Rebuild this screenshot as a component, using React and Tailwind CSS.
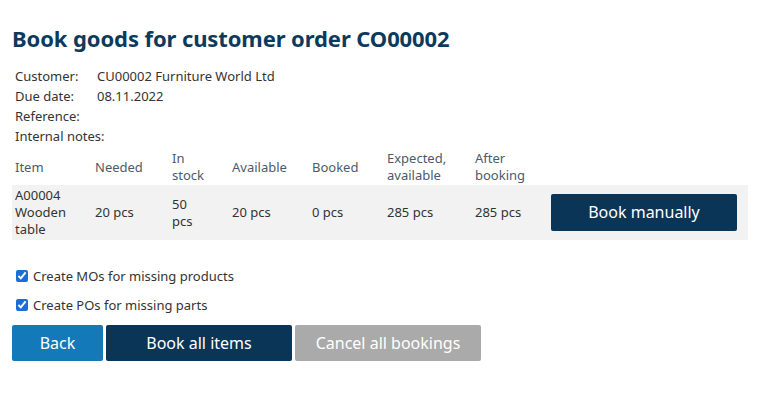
import { useState } from 'react';

const cols = 'grid grid-cols-[80px_77px_60px_80px_75px_88px_76px_200px]';

function App() {
    const [createMOs, setCreateMOs] = useState(true);
    const [createPOs, setCreatePOs] = useState(true);

    return (
        <div className="min-h-screen bg-white px-3 pt-[24px] text-[13px] text-[#333333] font-['Noto_Sans',sans-serif]">
            <h1 className="text-[22px] font-bold leading-[28px] text-[#0d3a5c] tracking-[-0.1px]">
                Book goods for customer order CO00002
            </h1>

            {/* Order info */}
            <div className="mt-[14px] pl-[3px] leading-[20px] whitespace-nowrap">
                <div className="flex"><span className="w-[82px]">Customer:</span><span>CU00002 Furniture World Ltd</span></div>
                <div className="flex"><span className="w-[82px]">Due date:</span><span>08.11.2022</span></div>
                <div className="flex"><span className="w-[82px]">Reference:</span><span></span></div>
                <div className="flex"><span className="w-[82px]">Internal notes:</span><span></span></div>
            </div>

            {/* Items table */}
            <div className="mt-[3px] w-[736px] leading-[17px]">
                <div className={`${cols} h-[36px] items-center text-[#4a5b6c]`}>
                    <div className="pl-[3px]">Item</div>
                    <div className="pl-[3px]">Needed</div>
                    <div className="pl-[3px]">In<br />stock</div>
                    <div className="pl-[3px]">Available</div>
                    <div className="pl-[3px]">Booked</div>
                    <div className="pl-[3px]">Expected,<br />available</div>
                    <div className="pl-[3px]">After<br />booking</div>
                    <div></div>
                </div>
                <div className={`${cols} h-[55px] items-center bg-[#f2f2f2]`}>
                    <div className="pl-[3px]">A00004<br />Wooden<br />table</div>
                    <div className="pl-[3px]">20 pcs</div>
                    <div className="pl-[3px]">50<br />pcs</div>
                    <div className="pl-[3px]">20 pcs</div>
                    <div className="pl-[3px]">0 pcs</div>
                    <div className="pl-[3px]">285 pcs</div>
                    <div className="pl-[3px]">285 pcs</div>
                    <div className="pl-[3px]">
                        <button className="w-[186px] h-[37px] rounded-[2px] bg-[#0a3556] text-white text-[16px]">
                            Book manually
                        </button>
                    </div>
                </div>
            </div>

            {/* Options */}
            <div className="mt-[26px] pl-[4px] space-y-[9px] leading-[20px]">
                <label className="flex items-center gap-[5px]">
                    <input type="checkbox" checked={createMOs} onChange={(e) => setCreateMOs(e.target.checked)} className="w-[12px] h-[12px] accent-[#1b6ed6]" />
                    Create MOs for missing products
                </label>
                <label className="flex items-center gap-[5px]">
                    <input type="checkbox" checked={createPOs} onChange={(e) => setCreatePOs(e.target.checked)} className="w-[12px] h-[12px] accent-[#1b6ed6]" />
                    Create POs for missing parts
                </label>
            </div>

            <div className="mt-[10px] flex gap-[3px] text-[16px] text-white">
                <button className="w-[91px] h-[36px] rounded-[2px] bg-[#1479b8]">Back</button>
                <button className="w-[186px] h-[36px] rounded-[2px] bg-[#0a3556]">Book all items</button>
                <button className="w-[186px] h-[36px] rounded-[2px] bg-[#aaaaaa]">Cancel all bookings</button>
            </div>
        </div>
    );
}

export default App;
